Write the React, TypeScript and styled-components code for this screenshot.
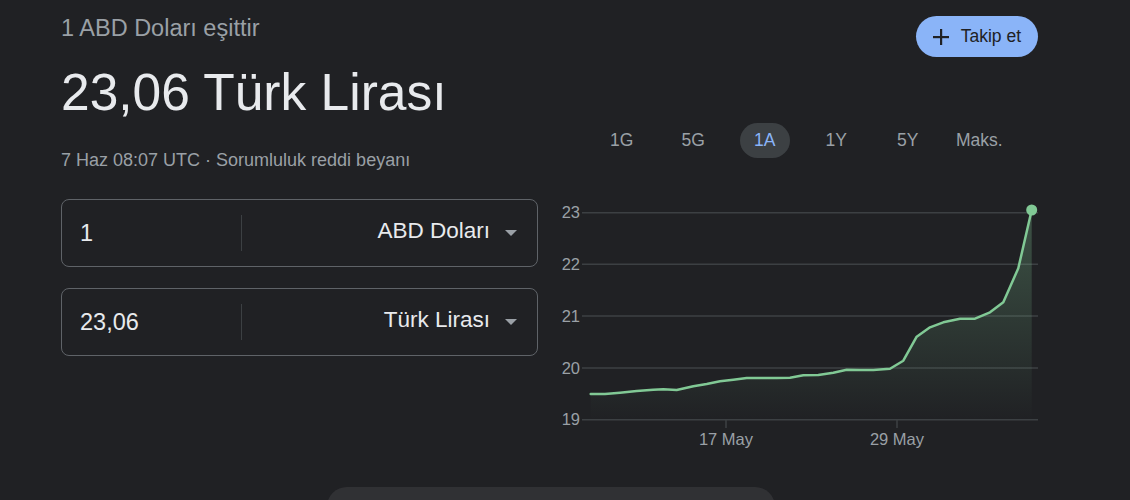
import React from "react";
import styled, { createGlobalStyle } from "styled-components";

const GlobalStyle = createGlobalStyle`
  html, body {
    margin: 0;
    padding: 0;
    background: #202124;
    overflow: hidden;
    font-family: "Liberation Sans", Arial, sans-serif;
  }
`;

const Container = styled.div`
  margin-left: 61px;
  width: 979px;
  display: flex;
  flex-direction: column;
`;

const Main = styled.div`
  display: flex;
  gap: 17px;
`;

const LeftColumn = styled.div`
  width: 477px;
  flex: none;
  display: flex;
  flex-direction: column;
`;

const Subtitle = styled.div`
  margin-top: 14px;
  font-size: 23.5px;
  line-height: 28px;
  color: #9aa0a6;
  white-space: nowrap;
`;

const Title = styled.div`
  margin-top: 20px;
  font-size: 51.5px;
  line-height: 60px;
  color: #e8eaed;
  white-space: nowrap;
`;

const Meta = styled.div`
  margin-top: 28px;
  font-size: 18px;
  line-height: 20px;
  color: #9aa0a6;
  white-space: nowrap;
`;

const Fields = styled.div`
  margin-top: 29px;
  display: flex;
  flex-direction: column;
  gap: 21px;
`;

const FieldBox = styled.div`
  box-sizing: border-box;
  height: 68px;
  border: 1px solid #5f6368;
  border-radius: 8px;
  display: flex;
  align-items: center;
`;

const ValueCell = styled.div`
  width: 179px;
  padding-left: 18px;
  box-sizing: border-box;
  font-size: 23.5px;
  color: #e8eaed;
`;

const Divider = styled.div`
  width: 1px;
  height: 36px;
  background: #3c4043;
`;

const SelectCell = styled.div`
  flex: 1;
  display: flex;
  align-items: center;
  justify-content: flex-end;
  gap: 15px;
  padding-right: 20px;
  padding-bottom: 5px;
  font-size: 22.5px;
  color: #e8eaed;
`;

const Caret = styled.span`
  width: 0;
  height: 0;
  margin-top: 5px;
  border-left: 6.5px solid transparent;
  border-right: 6.5px solid transparent;
  border-top: 6.5px solid #9aa0a6;
`;

const RightColumn = styled.div`
  width: 485px;
  flex: none;
  display: flex;
  flex-direction: column;
`;

const FollowRow = styled.div`
  display: flex;
  justify-content: flex-end;
  padding-right: 2px;
  margin-top: 16px;
`;

const FollowButton = styled.button`
  height: 41px;
  box-sizing: border-box;
  padding: 0 17px;
  border: none;
  border-radius: 21px;
  background: #8ab4f8;
  color: #202124;
  display: flex;
  align-items: center;
  gap: 12px;
  font-family: "Liberation Sans", Arial, sans-serif;
  font-size: 17.5px;
  cursor: pointer;
`;

const Tabs = styled.div`
  margin-top: 66px;
  padding-left: 31px;
  display: flex;
`;

const TabCell = styled.div`
  width: 71.5px;
  display: flex;
  justify-content: center;
`;

const Tab = styled.div<{ $active?: boolean }>`
  height: 35px;
  min-width: 50px;
  box-sizing: border-box;
  padding: 0 14px;
  border-radius: 18px;
  display: flex;
  align-items: center;
  justify-content: center;
  font-size: 17.5px;
  white-space: nowrap;
  color: ${(p) => (p.$active ? "#8ab4f8" : "#9aa0a6")};
  background: ${(p) => (p.$active ? "#3c4043" : "transparent")};
`;

const Chart = styled.svg`
  display: block;
  margin-top: 37px;
`;

const BottomClip = styled.div`
  margin: 32px auto 0;
  width: 448px;
  height: 13px;
  overflow: hidden;
`;

const BottomBar = styled.div`
  height: 48px;
  border-radius: 20px;
  background: #303134;
`;

const PlusIcon = () => (
  <svg width="16" height="16" viewBox="0 0 16 16">
    <rect x="7" y="0" width="2.2" height="16" fill="#202124" />
    <rect x="0" y="7" width="16" height="2.2" fill="#202124" />
  </svg>
);

const points: [number, number][] = [
  [590.7, 394], [605, 394], [620, 392.7], [636.7, 391], [653.3, 389.7],
  [663.3, 389.3], [676.7, 390], [693.3, 386.3], [706.7, 384], [720, 381.3],
  [733.3, 379.7], [746.7, 378], [760, 378], [776.7, 378], [790, 377.7],
  [803.3, 375.3], [818.3, 375], [833.3, 372.7], [846.7, 369.7], [860, 370],
  [873.3, 370], [890, 368.7], [903.3, 360.7], [916.7, 336.7], [930, 327.3],
  [943.3, 322.3], [960, 318.7], [975, 318.7], [990, 312.3], [1003.3, 302.3],
  [1018.3, 268.3], [1031.7, 210],
];

const grid = [
  { label: "23", y: 212.7 },
  { label: "22", y: 264.3 },
  { label: "21", y: 316 },
  { label: "20", y: 368 },
  { label: "19", y: 419.7 },
];

const PriceChart = () => {
  const line = points.map((p) => p.join(",")).join(" ");
  const area = `${line} 1031.7,420 590.7,420`;
  return (
    <Chart width="485" height="260" viewBox="555 195 485 260">
      <defs>
        <linearGradient id="fillGrad" gradientUnits="userSpaceOnUse" x1="0" y1="210" x2="0" y2="420">
          <stop offset="0" stopColor="#81c995" stopOpacity="0.3" />
          <stop offset="1" stopColor="#81c995" stopOpacity="0" />
        </linearGradient>
      </defs>
      {grid.map((g) => (
        <g key={g.label}>
          <line x1="582" x2="1038" y1={g.y} y2={g.y} stroke="#3c4043" strokeWidth="1.5" />
          <text
            x="580"
            y={g.y + 5.7}
            textAnchor="end"
            fill="#9aa0a6"
            fontSize="16.5"
            fontFamily="Liberation Sans, Arial, sans-serif"
          >
            {g.label}
          </text>
        </g>
      ))}
      {[
        { x: 726, label: "17 May" },
        { x: 897, label: "29 May" },
      ].map((t) => (
        <g key={t.label}>
          <line x1={t.x} x2={t.x} y1="420" y2="428" stroke="#3c4043" strokeWidth="1.5" />
          <text
            x={t.x}
            y="445"
            textAnchor="middle"
            fill="#9aa0a6"
            fontSize="16.5"
            fontFamily="Liberation Sans, Arial, sans-serif"
          >
            {t.label}
          </text>
        </g>
      ))}
      <polygon points={area} fill="url(#fillGrad)" />
      <polyline
        points={line}
        fill="none"
        stroke="#81c995"
        strokeWidth="2.5"
        strokeLinejoin="round"
        strokeLinecap="round"
      />
      <circle cx="1031.7" cy="210" r="5.5" fill="#81c995" />
    </Chart>
  );
};

const tabs = ["1G", "5G", "1A", "1Y", "5Y", "Maks."];

export default function App() {
  return (
    <>
      <GlobalStyle />
      <Container>
        <Main>
          <LeftColumn>
            <Subtitle>1 ABD Doları eşittir</Subtitle>
            <Title>23,06 Türk Lirası</Title>
            <Meta>7 Haz 08:07 UTC · Sorumluluk reddi beyanı</Meta>
            <Fields>
              <FieldBox>
                <ValueCell>1</ValueCell>
                <Divider />
                <SelectCell>
                  ABD Doları
                  <Caret />
                </SelectCell>
              </FieldBox>
              <FieldBox>
                <ValueCell>23,06</ValueCell>
                <Divider />
                <SelectCell>
                  Türk Lirası
                  <Caret />
                </SelectCell>
              </FieldBox>
            </Fields>
          </LeftColumn>
          <RightColumn>
            <FollowRow>
              <FollowButton>
                <PlusIcon />
                Takip et
              </FollowButton>
            </FollowRow>
            <Tabs>
              {tabs.map((t) => (
                <TabCell key={t}>
                  <Tab $active={t === "1A"}>{t}</Tab>
                </TabCell>
              ))}
            </Tabs>
            <PriceChart />
          </RightColumn>
        </Main>
        <BottomClip>
          <BottomBar />
        </BottomClip>
      </Container>
    </>
  );
}
